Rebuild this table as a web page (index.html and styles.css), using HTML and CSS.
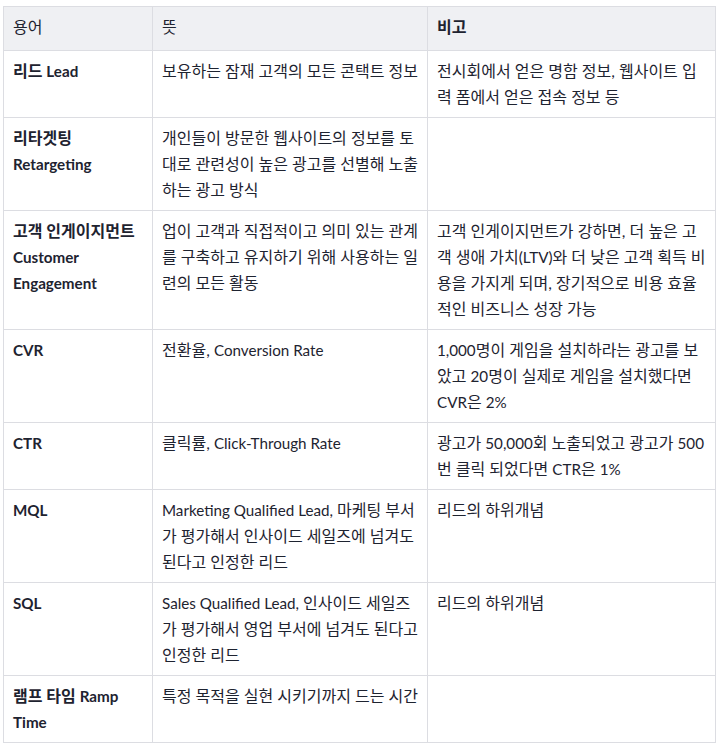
FILE: index.html
```html
<!DOCTYPE html>
<html lang="ko">
<head>
<meta charset="utf-8">
<title>용어 정리</title>
<link rel="stylesheet" href="styles.css">
</head>
<body>
<table class="glossary">
  <colgroup>
    <col class="col-term">
    <col class="col-meaning">
    <col class="col-note">
  </colgroup>
  <thead>
    <tr>
      <th>용어</th>
      <th>뜻</th>
      <th><strong>비고</strong></th>
    </tr>
  </thead>
  <tbody>
    <tr>
      <td><strong>리드 <span class="en" lang="en">Lead</span></strong></td>
      <td>보유하는 잠재 고객의 모든 콘택트 정보</td>
      <td>전시회에서 얻은 명함 정보, 웹사이트 입력 폼에서 얻은 접속 정보 등</td>
    </tr>
    <tr>
      <td><strong>리타겟팅 <span class="en" lang="en">Retargeting</span></strong></td>
      <td>개인들이 방문한 웹사이트의 정보를 토대로 관련성이 높은 광고를 선별해 노출하는 광고 방식</td>
      <td></td>
    </tr>
    <tr>
      <td><strong>고객 인게이지먼트 <span class="en" lang="en">Customer Engagement</span></strong></td>
      <td>업이 고객과 직접적이고 의미 있는 관계를 구축하고 유지하기 위해 사용하는 일련의 모든 활동</td>
      <td>고객 인게이지먼트가 강하면, 더 높은 고객 생애 가치<span class="en">(LTV)</span>와 더 낮은 고객 획득 비용을 가지게 되며, 장기적으로 비용 효율적인 비즈니스 성장 가능</td>
    </tr>
    <tr>
      <td><strong><span class="en" lang="en">CVR</span></strong></td>
      <td>전환율, <span class="en" lang="en">Conversion Rate</span></td>
      <td><span class="en">1,000</span>명이 게임을 설치하라는 광고를 보았고 <span class="en">20</span>명이 실제로 게임을 설치했다면 <span class="en">CVR</span>은 <span class="en">2%</span></td>
    </tr>
    <tr>
      <td><strong><span class="en" lang="en">CTR</span></strong></td>
      <td>클릭률, <span class="en" lang="en">Click-Through Rate</span></td>
      <td>광고가 <span class="en">50,000</span>회 노출되었고 광고가 <span class="en">500</span>번 클릭 되었다면 <span class="en">CTR</span>은 <span class="en">1%</span></td>
    </tr>
    <tr>
      <td><strong><span class="en" lang="en">MQL</span></strong></td>
      <td><span class="en" lang="en">Marketing Qualified Lead,</span> 마케팅 부서가 평가해서 인사이드 세일즈에 넘겨도 된다고 인정한 리드</td>
      <td>리드의 하위개념</td>
    </tr>
    <tr>
      <td><strong><span class="en" lang="en">SQL</span></strong></td>
      <td><span class="en" lang="en">Sales Qualified Lead,</span> 인사이드 세일즈가 평가해서 영업 부서에 넘겨도 된다고 인정한 리드</td>
      <td>리드의 하위개념</td>
    </tr>
    <tr>
      <td><strong>램프 타임 <span class="en" lang="en">Ramp Time</span></strong></td>
      <td>특정 목적을 실현 시키기까지 드는 시간</td>
      <td></td>
    </tr>
  </tbody>
</table>
</body>
</html>
```

FILE: styles.css
```css
html, body {
  margin: 0;
  padding: 0;
  background: #ffffff;
}

body {
  padding: 6px 1px 0 3px;
  font-family: Lato, "Noto Sans CJK KR", sans-serif;
  font-size: 16px;
  line-height: 26px;
  color: #1e2330;
}

.glossary {
  border-collapse: collapse;
  table-layout: fixed;
  width: 712px;
}

.col-term { width: 149px; }
.col-meaning { width: 275px; }
.col-note { width: 288px; }

.glossary th,
.glossary td {
  border: 1px solid #dcdde2;
  padding: 7px 9px;
  text-align: left;
  vertical-align: top;
}

.glossary th {
  background: #eff0f3;
  font-weight: 400;
  padding-top: 7px;
  padding-bottom: 10px;
}

.glossary strong {
  font-weight: 700;
}

.en {
  font-size: 15.2px;
}
```
